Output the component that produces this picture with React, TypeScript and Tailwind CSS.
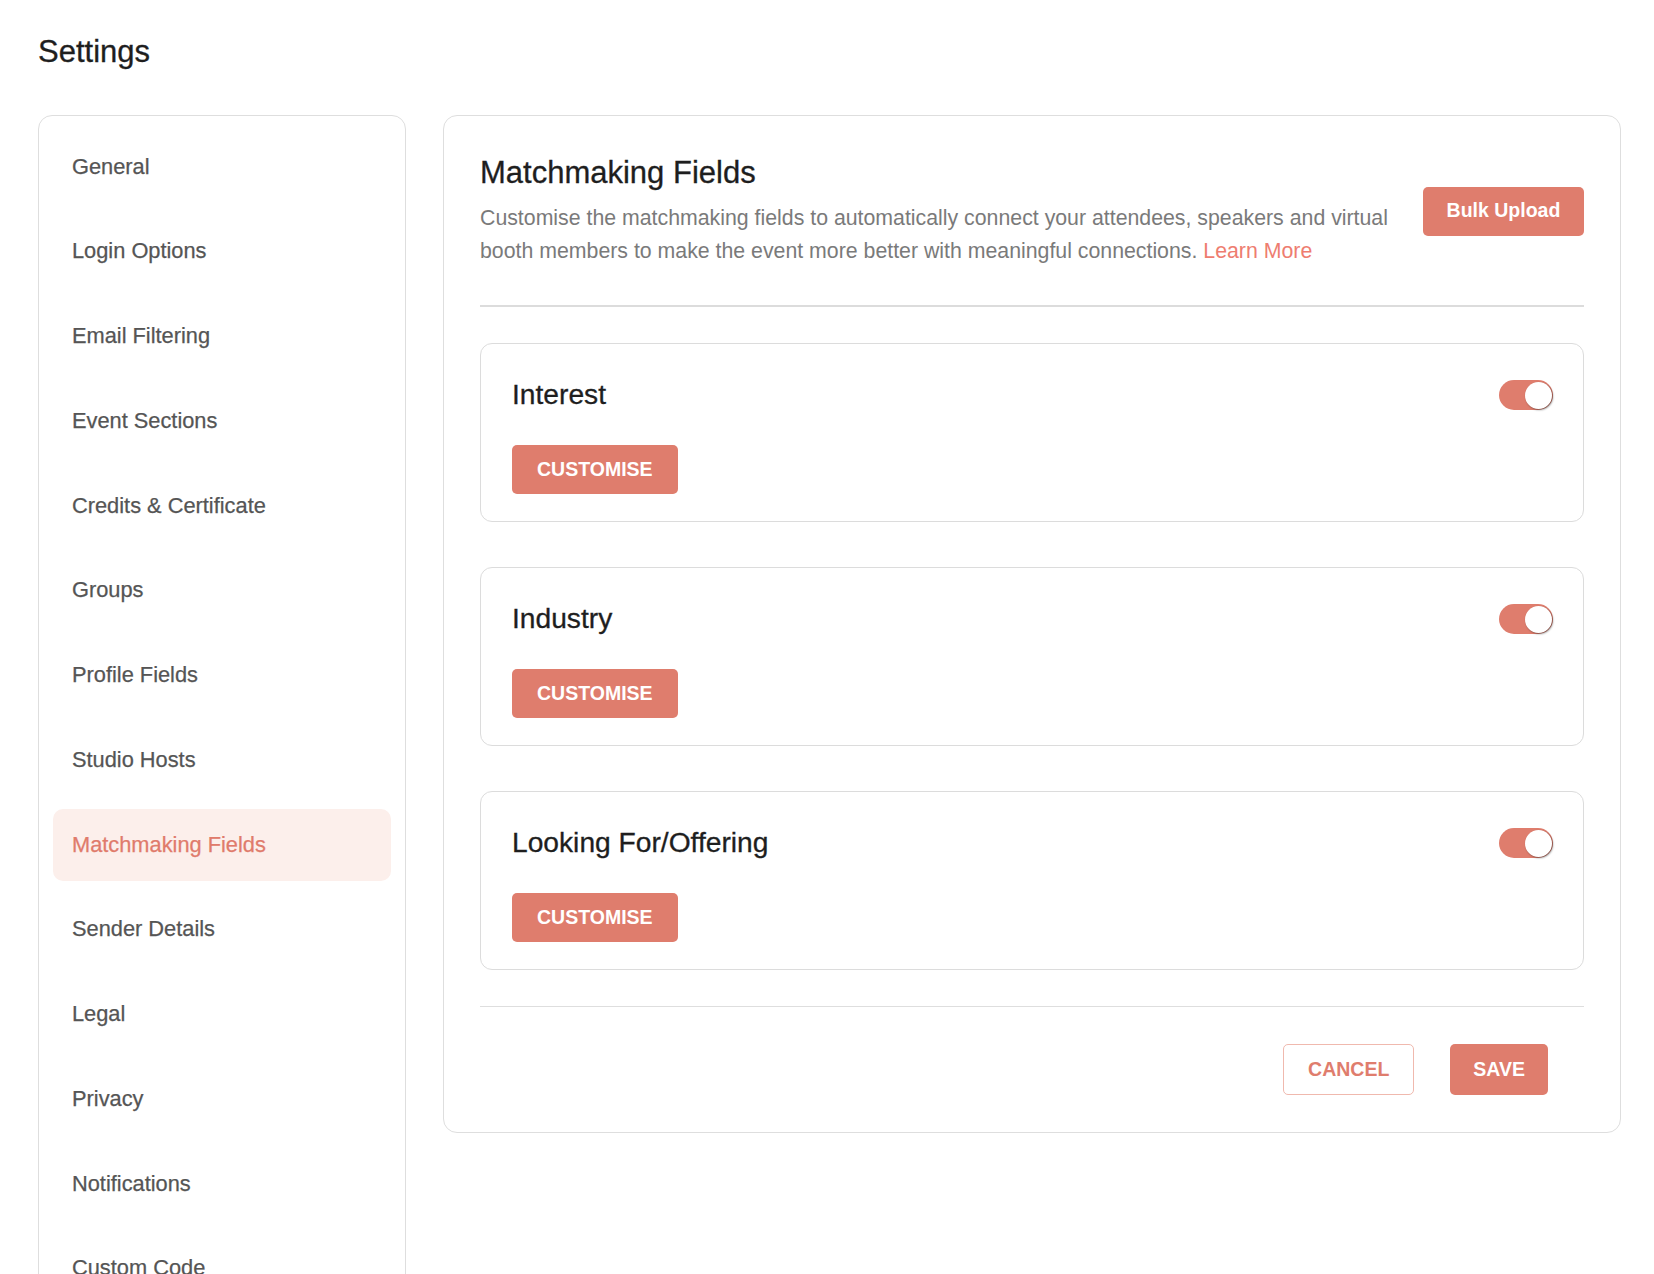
import React from "react";

const navItems = [
  "General",
  "Login Options",
  "Email Filtering",
  "Event Sections",
  "Credits & Certificate",
  "Groups",
  "Profile Fields",
  "Studio Hosts",
  "Matchmaking Fields",
  "Sender Details",
  "Legal",
  "Privacy",
  "Notifications",
  "Custom Code",
];

function Toggle() {
  return (
    <div className="relative mt-[4px] h-[30px] w-[54px] shrink-0 rounded-full bg-[#df7d6d]">
      <div className="absolute right-[1px] top-[1.5px] h-[27px] w-[27px] rounded-full bg-white shadow-[1px_1px_2px_rgba(0,0,0,0.45)]" />
    </div>
  );
}

function FieldCard({ title }: { title: string }) {
  return (
    <div className="rounded-[12px] border border-[#dcdcdc] bg-white pl-[31px] pr-[30px] pt-[32px] pb-[27px]">
      <div className="flex items-start justify-between">
        <div className="text-[28.2px] leading-[36px] text-[#1e1e1e] [-webkit-text-stroke:0.3px]">{title}</div>
        <Toggle />
      </div>
      <button className="mt-[33px] h-[49px] rounded-[5px] bg-[#df7d6d] px-[25px] text-[19.5px] font-bold leading-none text-white">
        CUSTOMISE
      </button>
    </div>
  );
}

export default function App() {
  return (
    <div
      className="min-h-screen bg-white pl-[38px] pr-[33px] pt-[34px]"
      style={{ fontFamily: '"Liberation Sans", Arial, Helvetica, sans-serif' }}
    >
      <h1 className="text-[31px] font-normal leading-[36px] text-[#1e1e1e] [-webkit-text-stroke:0.3px]">Settings</h1>
      <div className="mt-[45px] flex items-start gap-[37px]">
        <aside className="w-[368px] shrink-0 rounded-[14px] border border-[#dedede] bg-white px-[14px] pt-[15px] pb-[20px]">
          <nav className="flex flex-col gap-[12.75px]">
            {navItems.map((item) => {
              const active = item === "Matchmaking Fields";
              return (
                <div
                  key={item}
                  className={
                    active
                      ? "flex h-[72px] items-center rounded-[10px] bg-[#fcefeb] pl-[19px] text-[21.8px] text-[#e07b6b] [-webkit-text-stroke:0.25px]"
                      : "flex h-[72px] items-center rounded-[10px] pl-[19px] text-[21.8px] text-[#555555] [-webkit-text-stroke:0.25px]"
                  }
                >
                  {item}
                </div>
              );
            })}
          </nav>
        </aside>

        <main className="flex-1 rounded-[14px] border border-[#dedede] bg-white px-[36px] pt-[39px] pb-[37px]">
          <div className="flex items-center justify-between">
            <div className="w-[935px]">
              <h2 className="text-[31px] font-normal leading-[36px] text-[#1e1e1e] [-webkit-text-stroke:0.3px]">
                Matchmaking Fields
              </h2>
              <p className="mt-[11px] text-[21.3px] leading-[32.5px] text-[#7a7a7a]">
                Customise the matchmaking fields to automatically connect your attendees, speakers and virtual booth
                members to make the event more better with meaningful connections.{" "}
                <span className="text-[#ee7d70]">Learn More</span>
              </p>
            </div>
            <button className="h-[49px] w-[161px] shrink-0 rounded-[5px] bg-[#df7d6d] text-[19.5px] font-bold leading-none text-white">
              Bulk Upload
            </button>
          </div>

          <div className="mt-[38px] h-[2px] bg-[#dcdcdc]" />

          <div className="mt-[36px] flex flex-col gap-[45px]">
            <FieldCard title="Interest" />
            <FieldCard title="Industry" />
            <FieldCard title="Looking For/Offering" />
          </div>

          <div className="mt-[36px] h-px bg-[#dedede]" />

          <div className="mt-[37px] flex justify-end gap-[36px] pr-[36px]">
            <button className="h-[51px] rounded-[5px] border border-[#f0b9ae] bg-white px-[24px] text-[19.5px] font-bold leading-none text-[#df7d6d]">
              CANCEL
            </button>
            <button className="h-[51px] rounded-[5px] bg-[#df7d6d] px-[23px] text-[19.5px] font-bold leading-none text-white">
              SAVE
            </button>
          </div>
        </main>
      </div>
    </div>
  );
}
